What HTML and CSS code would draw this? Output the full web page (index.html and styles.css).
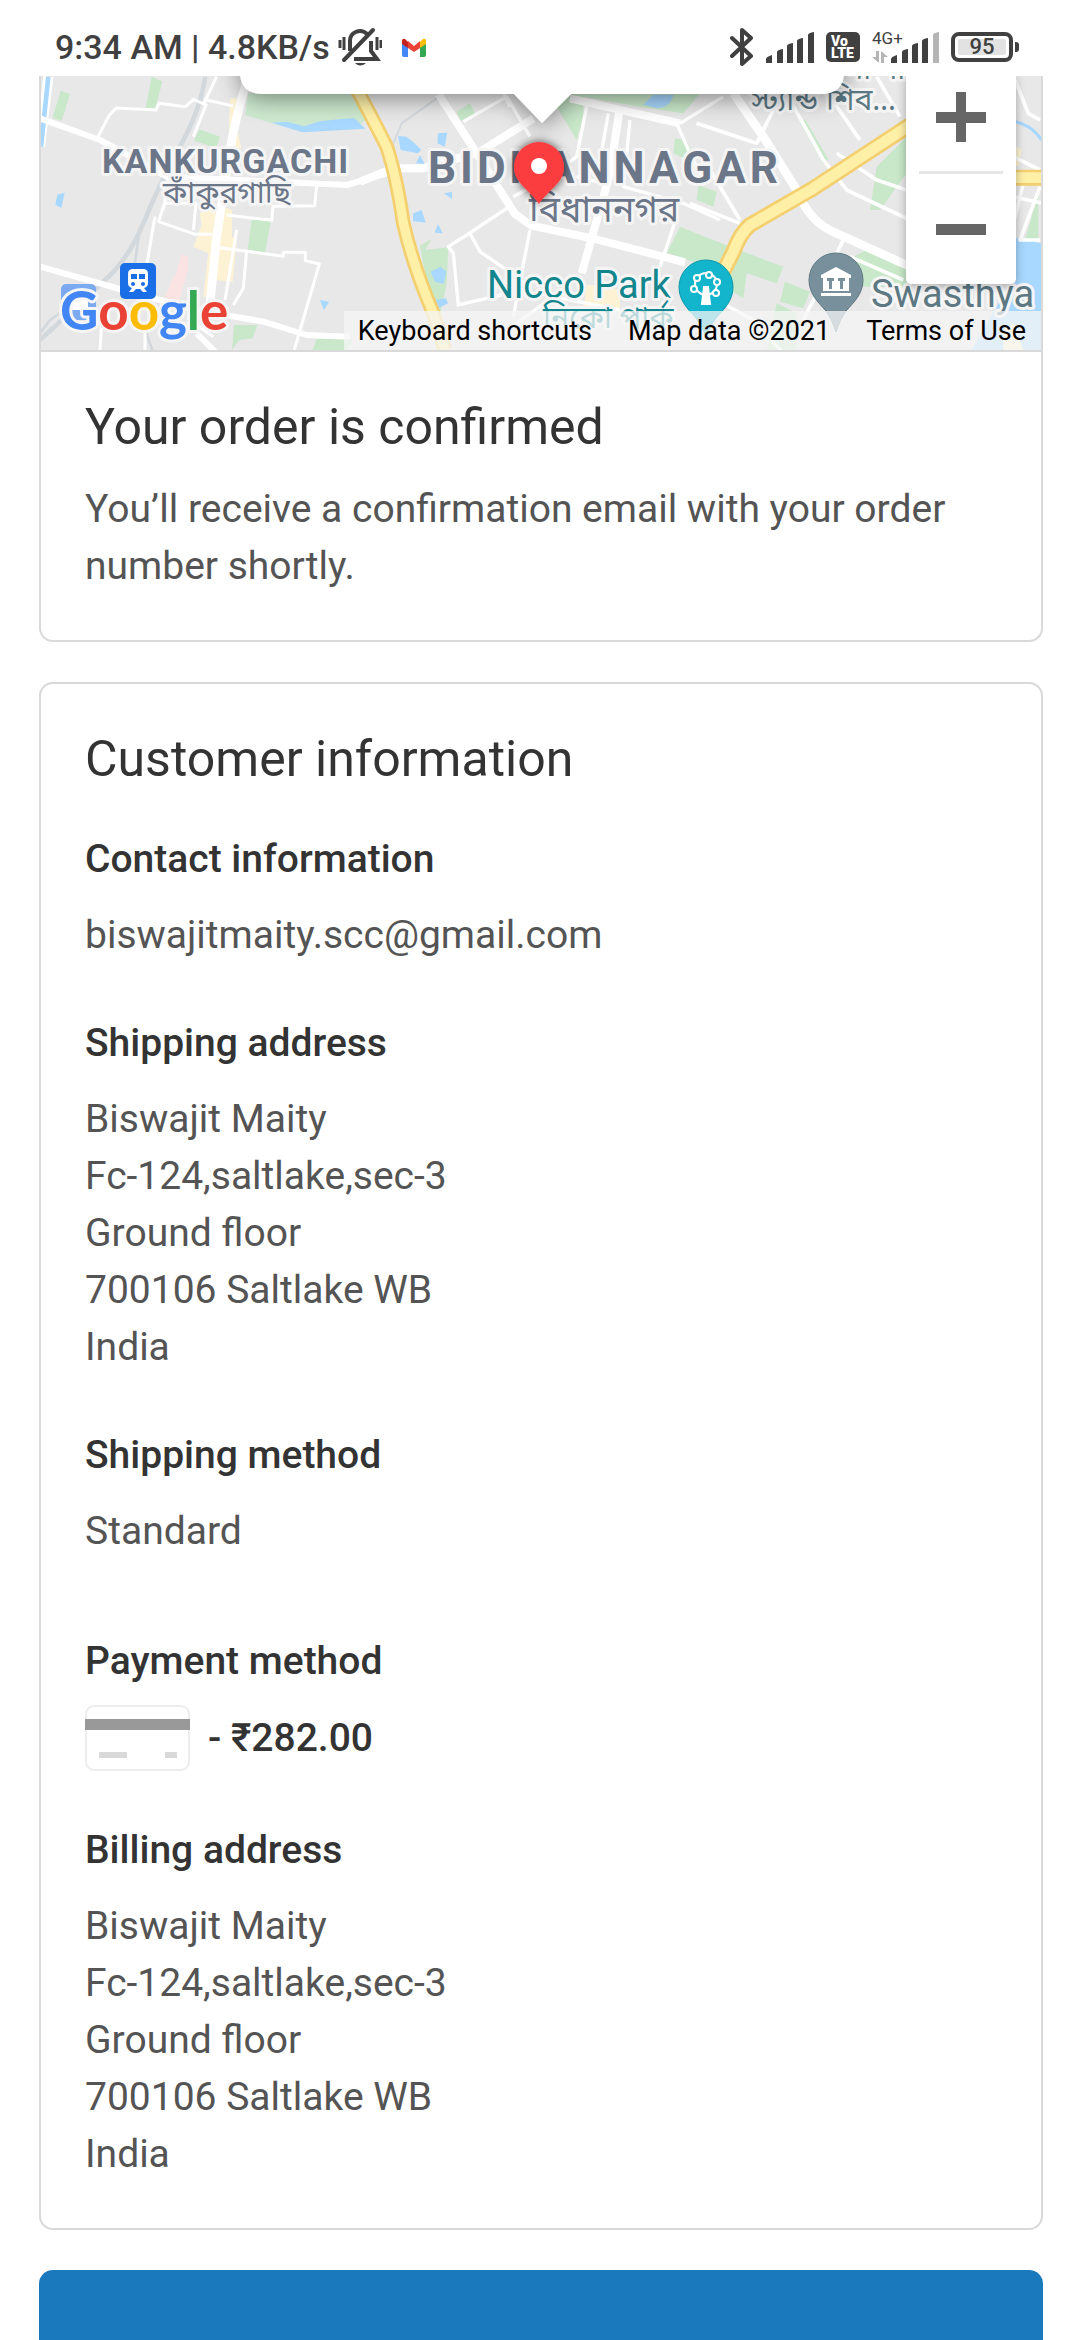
FILE: index.html
```html
<!DOCTYPE html>
<html lang="en">
<head>
<meta charset="utf-8">
<meta name="viewport" content="width=device-width, initial-scale=1">
<title>Order confirmed</title>
<link rel="stylesheet" href="styles.css">
</head>
<body>
<header class="status">
  <span class="status-text">9:34 AM | 4.8KB/s</span>
  <svg class="bell" width="44" height="40" viewBox="0 0 44 40" fill="none" stroke="#404040" stroke-width="4">
    <path d="M12 24V15a10 10 0 0 1 17-8M33 14v10l6 8H16"/>
    <path d="M6 33L35 3" stroke-linecap="round"/>
    <path d="M17 36q5 5 11 0z" fill="#404040" stroke="none"/>
    <path d="M2 13v8M6 10v13M39 10v13M43 13v8" stroke-width="3"/>
  </svg>
  <svg class="gmail" width="24" height="19" viewBox="0 0 24 19">
    <path d="M0 3v14q0 2 2 2h4V5z" fill="#4285f4"/>
    <path d="M24 3v14q0 2-2 2h-4V5z" fill="#34a853"/>
    <path d="M18 4l3-3q3-1 3 2v3l-6 4z" fill="#fbbc04"/>
    <path d="M6 4L3 1Q0 0 0 3v3l6 4z" fill="#c5221f"/>
    <path d="M6 3l6 5 6-5v7l-6 4-6-4z" fill="#ea4335"/>
  </svg>
  <div class="status-right">
    <svg width="24" height="40" viewBox="0 0 24 40" fill="none" stroke="#404040" stroke-width="4" stroke-linejoin="round" stroke-linecap="round"><path d="M2 11L21 29 12 37V3l9 8L2 29"/></svg>
    <svg width="48" height="31" viewBox="0 0 48 31" fill="#404040"><path d="M0 31v-4q0-2 6-4v8zM11 31V20q0-2 6-3v14zM21 31V14q0-2 6-3v20zM31 31V9q0-2 6-3v25zM42 31V3q0-2 6-3v31z"/></svg>
    <span class="volte"><span>Vo</span><span>LTE</span></span>
    <span class="net"><span>4G+</span><svg width="16" height="12" viewBox="0 0 16 12" fill="#b5b5b5"><path d="M4 0h3v12L0 6h4zM9 12V0l7 6h-4v6z"/></svg></span>
    <svg class="sig2" width="48" height="31" viewBox="0 0 48 31" fill="#404040"><path d="M0 31v-4q0-2 6-4v8zM11 31V20q0-2 6-3v14zM21 31V14q0-2 6-3v20zM31 31V9q0-2 6-3v25z"/><path d="M42 31V3q0-2 6-3v31z" fill="#b5b5b5"/></svg>
    <span class="battery"><span>95</span></span>
  </div>
</header>

<main class="page">
  <section class="card">
    <div class="map">
      <svg class="map-art" viewBox="0 0 1000 274">
        <defs>
          <filter id="soft" x="-50%" y="-50%" width="200%" height="200%"><feDropShadow dx="0" dy="4" stdDeviation="12" flood-opacity=".45"/></filter>
          <filter id="pinshade" x="-50%" y="-50%" width="200%" height="200%"><feDropShadow dx="0" dy="0" stdDeviation="5" flood-opacity=".7"/></filter>
        </defs>
        <rect width="1000" height="274" fill="#e8e8e8"/>
        <!-- west -->
        <g transform="translate(-11 -6) scale(.33333)" fill="none" stroke-linejoin="round">
          <path d="M365 20l32 14-20 80h-30zM92 62l28 10-25 80-27-8zM508 178l62 22-12 34-66-22zM665 450h58l-18 98-52-10zM612 765l70 0-14 40-40 5-22 30zM860 806h110l-20 34H848z" fill="#c8e8c9"/>
          <path d="M655 70h320l40 75-40 30-180 5-150-45z" fill="#cde9cf"/>
          <path d="M725 158l45-3 52 14 50-16 100-9 35 32-190 11z M82 374l22-6-10 46-18-10z M870 690l27 5-15 26z" fill="#a8d8ff"/>
          <path d="M600 85h22l-8 60 20 90h-12l-26-5zM540 400l66 20v80l14 10-12 125-50-5-18 50h-20l15-130-45-20 25-65-5-35z" fill="#fdf3d4"/>
          <path d="M455 552l20 10-2 40-25 90h-46q20-60 35-80z" fill="#fbe3e3"/>
          <path d="M525 20q-10 90-75 210T340 460 215 640L30 810" stroke="#d3d8dc" stroke-width="14"/>
          <path d="M330 470l-15 110M215 640L60 750 30 790M350 790l20 60" stroke="#d3d8dc" stroke-width="8"/>
          <path d="M55 20L30 230" stroke="#fff" stroke-width="30"/><path d="M55 20L33 230" stroke="#a8d8ff" stroke-width="14"/>
          <path d="M30 145l180 65 200 110 540 25 120-35M30 590l250 70 220 60 200 35 130 40 130 5M500 790l55 55" stroke="#fff" stroke-width="18"/>
          <path d="M655 20q-40 120-60 250t-35 230l-25 250" stroke="#fff" stroke-width="26"/>
          <path d="M204 200l34-64 20-22 120 6 8-20 80 10 25-22 30 14L560 20M530 90l80 18M490 200l40-100M400 420l18-100M375 440l-24 140M490 480l8-80h-95l-17 55 110 38h50M590 435l135 16 4-42 125-2 6-60M570 533l190 26v-12h66v25l42 10-75 258M650 540l-10 115-30 50M620 480l-35 210M345 790v60M215 760l-5 80M480 750l70 50" stroke="#fff" stroke-width="9"/>
        </g>
        <!-- centre -->
        <g transform="translate(329 -6) scale(.33333)" fill="none" stroke-linejoin="round">
          <path d="M260 125l40-25 16 35-44 18zM560 110l50-40h380l-50 60-130-20-170-30v60l-20 70zM915 205l30 5 30 45-20 15-45-20zM930 470l150 60v80l-190-60zM985 345l55 20-10 45-50-20zM165 540l70-8-5 110-30 140-40-200-10-55 35-20z" fill="#c8e8c9"/>
          <path d="M850 74h60q-10 40-50 40l-40-10zM84 198l25 2 20 15 25 25-10 10-52-10zM204 190l28-2-8 42-22-10zM138 280l12-24 14 26zM222 370l24-4v22zM130 430l25-10 12 38-38-4zM194 488l10-26 14 28zM182 605l30-15 17 15-8 36-25-5zM198 690l30-5 6 15-35 18z" fill="#a8d8ff"/>
          <path d="M650 645h60l40 20v60H640z" fill="#fdf3d4"/>
          <path d="M205 72l110 170 50 80 70 110 50 35 190 40 270 70M-30 335l100-40h90l170-50 160-100M600 85l130 30 200 45M750 110l-30 200-65 230-20 70" stroke="#fff" stroke-width="24"/>
          <path d="M70 220l25-60 105-75" stroke="#d3d8dc" stroke-width="6"/>
          <path d="M280 155l130-75 70 120M400 70l20 40M650 110l-30 150-80 60-110 60M480 480l-50 260M410 415l-120 80-55 35 15 20 15 155 130-30M300 490l30 55 80 55M780 150l-20 200 180 50 110 50M715 130l-30 170M920 160l40 90 40 80M920 440l-50 150M1060 80l-130 80M700 340l-80-20M400 790l150-110 200 40" stroke="#fff" stroke-width="10"/>
          <path d="M-60 20q60 110 110 210 30 90 50 230 30 130 90 270l35 110" stroke="#f3cf70" stroke-width="44"/>
          <path d="M-60 20q60 110 110 210 30 90 50 230 30 130 90 270l35 110" stroke="#fff0a8" stroke-width="28"/>
        </g>
        <!-- east -->
        <g transform="translate(669 -6) scale(.33333)" fill="none" stroke-linejoin="round">
          <path d="M285 148l70 120-15 15-70-125zM500 290l90-90v110l-80 110h-30zM-20 500l240 90-20 50-90-30-10 75-80-50zM225 635l75 30-20 50-70-20zM430 560l60-30 100 60v60H450zM200 700l60 30v110h-90zM985 370l-40 140h40z" fill="#c8e8c9"/>
          <path d="M900 500l95 20v330H780l120-210z" fill="#a8d8ff"/>
          <path d="M920 230l15 10-10 50-15-10zM880 780l30-20 30 80h-60z" fill="#fdf3d4"/>
          <path d="M70 70l90 130 100 160q40 100 120 130l220 100" stroke="#fff" stroke-width="26"/>
          <path d="M240 90l100 180 70 90 190 90M360 80l90 130M-40 160l180 60 50-100M-60 400l150 60M0 300l90 150M400 510l-60 120-60 120M500 20l70 120M915 30l40 100 35 20M910 260l80 40M950 300l-50 200M910 380l90 20M990 350l-60 160h60M420 560l160 70M0 680l130 70 90 100M380 250l120 80 90 30" stroke="#fff" stroke-width="11"/>
          <path d="M915 155q50 10 80 55" stroke="#a8d8ff" stroke-width="10"/>
          <path d="M600 165L310 355l-190 110q-30 25-50 80l-30 60M880 323h120" stroke="#f3cf70" stroke-width="48"/>
          <path d="M600 165L310 355l-190 110q-30 25-50 80l-30 60M880 323h120" stroke="#fff0a8" stroke-width="32"/>
        </g>
        <g class="station" fill="#1a6fe6">
          <rect x="20" y="208" width="35" height="36" rx="5" fill="#7baaf0"/>
          <rect x="79" y="187" width="36" height="36" rx="5"/>
          <path d="M92 193h10q5 0 5 5v9q0 4-4 5l3 4h-4l-3-3h-4l-3 3h-4l3-4q-4-1-4-5v-9q0-5 5-5z" fill="#fff"/>
          <path d="M90 198h6v5h-6zM98 198h6v5h-6z"/><circle cx="92" cy="208" r="2"/><circle cx="102" cy="208" r="2"/>
          <path d="M29 219h18v15H29z" fill="#fff"/>
        </g>
        <g class="halo">
          <text class="area" x="61" y="97">KANKURGACHI</text>
          <text class="bn" x="122" y="127">কাঁকুরগাছি</text>
          <text class="area area-l" x="387" y="107">BIDHANNAGAR</text>
          <text class="bn bn-l" x="488" y="146">বিধাননগর</text>
          <text class="poi teal" x="446" y="222">Nicco Park</text>
          <text class="bn teal" x="502" y="252">নিকো পার্ক</text>
          <text class="bn slate" x="710" y="34">স্ট্যান্ড শিব…</text>
          <text class="bn slate" x="804" y="3">মা না</text>
          <text class="poi slate" x="830" y="231">Swasthya</text>
          <text class="google" x="19" y="254"><tspan fill="#4285f4">G</tspan><tspan fill="#ea4335">o</tspan><tspan fill="#fbbc05">o</tspan><tspan fill="#4285f4">g</tspan><tspan fill="#34a853">l</tspan><tspan fill="#ea4335">e</tspan></text>
        </g>
        <path d="M665 184a27 27 0 0 1 27 27c0 14-9 22-17 31q-6 8-10 18-4-10-10-18c-8-9-17-17-17-31a27 27 0 0 1 27-27z" fill="#12b5cb" stroke="#0f97a9"/>
        <g fill="none" stroke="#fff" stroke-width="2"><circle cx="665" cy="208" r="11"/><g fill="#12b5cb"><circle cx="668" cy="199" r="3"/><circle cx="656" cy="202" r="3"/><circle cx="653" cy="213" r="3"/><circle cx="676" cy="206" r="3"/><circle cx="675" cy="217" r="3"/></g><path d="M663 211h4l2 17h-8z" fill="#fff"/></g>
        <path d="M795 177a27 27 0 0 1 27 27c0 14-9 22-17 31q-6 8-10 21-4-13-10-21c-8-9-17-17-17-31a27 27 0 0 1 27-27z" fill="#78909c" stroke="#5f7883"/>
        <path d="M795 191l15 8v3h-2v13h-26v-13h-2v-3zM780 217h30v3h-30z" fill="#fff"/><path d="M786 202h7v3h-2v8h-3v-8h-2zM797 202h7v3h-2v8h-3v-8h-2z" fill="#78909c"/>
        <path d="M498 66a25 25 0 0 1 25 25c0 16-14 21-25 37-11-16-25-21-25-37a25 25 0 0 1 25-25z" fill="#fb3d3f" filter="url(#pinshade)"/><circle cx="498" cy="90" r="8" fill="#fff"/>
        <path d="M199-60h604V-4q0 22-24 22H530l-29 29-28-29H223q-24 0-24-22z" fill="#fff" filter="url(#soft)"/>
      </svg>
      <div class="zoom">
        <button type="button" aria-label="Zoom in"><svg width="50" height="50" viewBox="0 0 50 50"><path d="M20 0h10v20h20v11H30v19H20V31H0V20h20z" fill="#666"/></svg></button>
        <button type="button" aria-label="Zoom out"><svg width="50" height="50" viewBox="0 0 50 50"><path d="M0 20h50v11H0z" fill="#666"/></svg></button>
      </div>
      <div class="credits">
        <button type="button">Keyboard shortcuts</button>
        <span>Map data ©2021</span>
        <a href="#terms">Terms of Use</a>
      </div>
    </div>
    <div class="card-body">
      <h2>Your order is confirmed</h2>
      <p>You’ll receive a confirmation email with your order number shortly.</p>
    </div>
  </section>

  <section class="card info">
    <h2>Customer information</h2>
    <div class="block"><h3>Contact information</h3><p>biswajitmaity.scc@gmail.com</p></div>
    <div class="block"><h3>Shipping address</h3><address>Biswajit Maity<br>Fc-124,saltlake,sec-3<br>Ground floor<br>700106 Saltlake WB<br>India</address></div>
    <div class="block method"><h3>Shipping method</h3><p>Standard</p></div>
    <div class="block"><h3>Payment method</h3>
      <p class="pay"><svg width="105" height="66" viewBox="0 0 105 66"><rect x="1" y="1" width="103" height="64" rx="8" fill="#fff" stroke="#ededed" stroke-width="2"/><path d="M0 14h105v11H0z" fill="#999"/><path d="M14 47h28v6H14zM80 47h12v6H80z" fill="#d9d9d9"/></svg><span>- ₹282.00</span></p></div>
    <div class="block"><h3>Billing address</h3><address>Biswajit Maity<br>Fc-124,saltlake,sec-3<br>Ground floor<br>700106 Saltlake WB<br>India</address></div>
  </section>

  <button type="button" class="continue" aria-label="Continue shopping"></button>
</main>
</body>
</html>
```
FILE: styles.css
```css
* { box-sizing: border-box; }
html { height: 100%; overflow: hidden; }
body {
  margin: 0;
  height: 100%;
  overflow: hidden;
  background: #fff;
  color: #545454;
  font: 39px/57px Roboto, "Noto Sans", sans-serif;
}
h2, h3, p, address { margin: 0; font-style: normal; }
button { border: 0; padding: 0; background: none; font: inherit; color: inherit; }
svg { display: block; flex: none; }

.status {
  display: flex;
  align-items: center;
  height: 76px;
  padding: 20px 67px 2px 55px;
  color: #404040;
}
.status-text { font-size: 34px; line-height: 48px; font-weight: 500; white-space: nowrap; }
.bell { margin-left: 8px; }
.gmail { margin-left: 20px; }
.status-right { display: flex; align-items: center; gap: 12px; margin-left: auto; }
.volte {
  display: flex; flex-direction: column; justify-content: center;
  width: 34px; height: 30px; padding-left: 5px;
  border-radius: 5px; background: #404040; color: #fff;
  font-size: 14px; line-height: 12px; font-weight: 900;
}
.net { display: flex; flex-direction: column; gap: 7px; width: 17px; font-size: 17px; line-height: 12px; white-space: nowrap; }
.sig2 { margin-left: -10px; }
.battery {
  position: relative;
  width: 62px; height: 30px; padding: 3px;
  border: 4px solid #404040; border-radius: 8px;
  font-size: 22px; line-height: 16px; font-weight: 500; text-align: center;
}
.battery span { display: block; background: #e2e2e2; border-radius: 2px; }
.battery::after {
  content: ""; position: absolute; right: -10px; top: 6px;
  width: 4px; height: 10px; border-radius: 0 3px 3px 0; background: #404040;
}

.page { display: flex; flex-direction: column; gap: 40px; padding: 0 37px 0 39px; }
.card { border: 2px solid #d9d9d9; border-radius: 14px; }
.card:first-child { border-top: 0; border-radius: 0 0 14px 14px; }
.card h2 { font-size: 50px; line-height: 64px; font-weight: 400; color: #333; }
.card h3 { font-size: 39px; line-height: 57px; font-weight: 500; color: #333; }

.map { position: relative; overflow: hidden; border-bottom: 2px solid #d9d9d9; }
.map-art { width: 100%; height: auto; }
.halo text { paint-order: stroke; stroke: #f5f5f5; stroke-width: 6px; stroke-linejoin: round; }
.area { font-size: 34px; font-weight: 700; letter-spacing: 1px; fill: #6b7689; }
.area-l { font-size: 44px; letter-spacing: 4px; }
.bn { font-size: 30px; fill: #6b7689; font-family: "Noto Sans Bengali", "Noto Sans", sans-serif; }
.bn-l { font-size: 36px; }
.poi { font-size: 38px; }
.teal { fill: #12858d; }
.slate { fill: #5b7883; }
.google { font-family: Lato, sans-serif; font-size: 53px; font-weight: 700; }

.zoom {
  position: absolute; top: 0; right: 25px;
  width: 110px; padding: 0 13px 18px;
  border-radius: 0 0 5px 5px; background: #fff;
  box-shadow: 0 2px 10px rgba(0, 0, 0, .3);
}
.zoom button { display: flex; align-items: center; justify-content: center; width: 100%; height: 95px; padding-bottom: 14px; }
.zoom button + button { border-top: 3px solid #e6e6e6; padding: 18px 0 0; }
.credits {
  position: absolute; right: 0; bottom: 0;
  display: flex; gap: 36px; padding: 1px 15px 0 14px;
  background: rgba(245, 245, 245, .75);
  color: #000; font-size: 27px; line-height: 38px; white-space: nowrap;
}
.credits a { color: inherit; text-decoration: none; }

.card-body { padding: 43px 44px 45px; }
.card-body p { margin-top: 22px; }
.info { padding: 43px 44px 45px; }
.block { margin-top: 51px; }
h2 + .block { margin-top: 40px; }
.block p, .block address { margin-top: 19px; }
.method { padding-bottom: 22px; }
.block .pay { display: flex; align-items: center; gap: 18px; margin-top: 15px; color: #333; font-weight: 500; }

.continue { height: 90px; flex: none; border-radius: 14px; background: #1a78bc; }
```
